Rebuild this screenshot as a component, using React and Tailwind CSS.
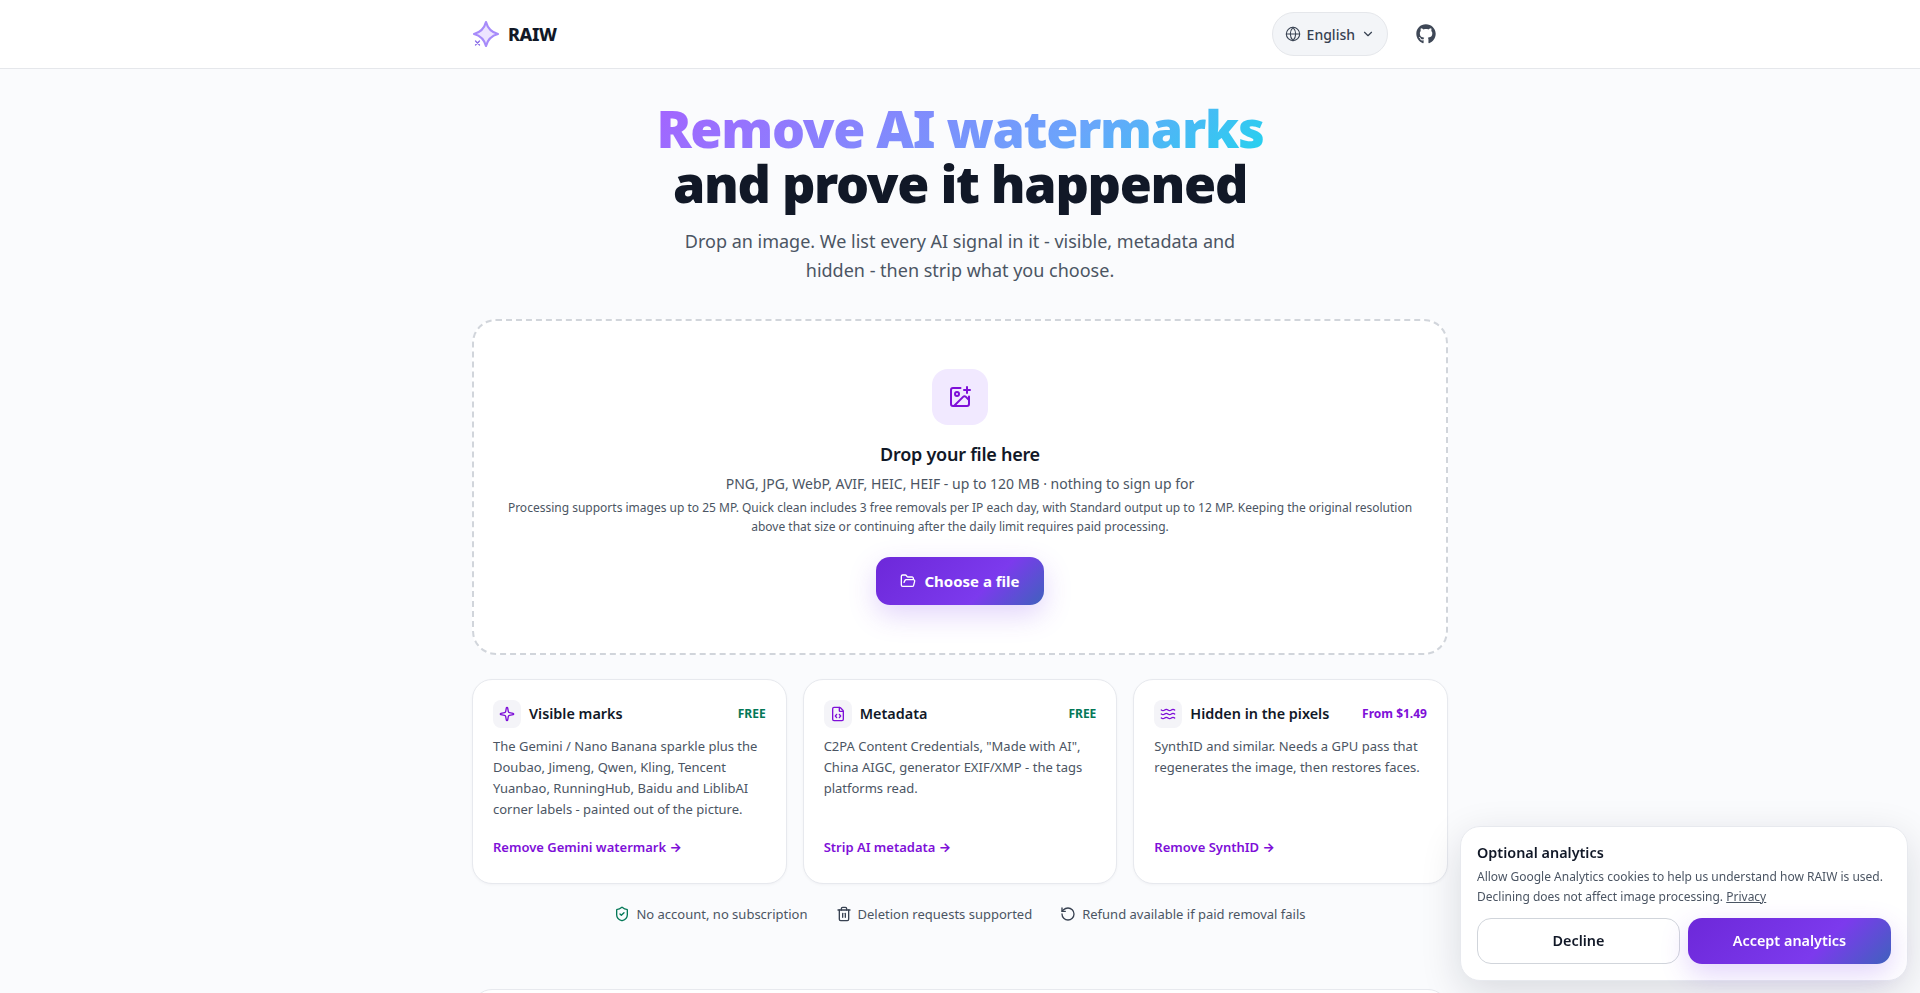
import React from 'react';
import { Globe, ChevronDown, ImagePlus, FolderOpen, Sparkle, FileCode, Waves, ShieldCheck, Trash2, RotateCcw } from 'lucide-react';
import { FaGithub } from 'react-icons/fa';

function Logo() {
  return (
    <svg width="28" height="28" viewBox="0 0 28 28" fill="none" className="shrink-0">
      <path d="M14 2Q16.500 11.500 26 14Q16.500 16.500 14 26Q11.500 16.500 2 14Q11.500 11.500 14 2Z" fill="#ede4ff" stroke="#a78bfa" strokeWidth="2.200" strokeLinejoin="round" />
      <path d="M3.500 21l4 4M7.500 21l-4 4" stroke="#8b6fe8" strokeWidth="1.300" strokeLinecap="round" />
    </svg>
  );
}

function Card({ icon, title, badge, badgeClass, text, link }) {
  return (
    <div className="flex flex-col rounded-[20px] border border-[#e7e9ee] bg-white px-5 pt-5 pb-[26px] shadow-[0_1px_3px_rgba(16,24,40,0.04)]">
      <div className="flex items-center gap-2">
        <span className="flex h-7 w-7 shrink-0 items-center justify-center rounded-lg bg-[#f4f4f8] text-[#7e0fd8]">{icon}</span>
        <span className="flex-1 text-[14.400px] leading-7 font-semibold text-[#111827]">{title}</span>
        <span className={`text-[12px] font-bold ${badgeClass}`}>{badge}</span>
      </div>
      <p className="mt-[8px] h-[84px] text-[13px] leading-[21px] text-[#4b5563]">{text}</p>
      <a className="mt-[17px] text-[13px] leading-[20px] font-semibold text-[#7e0fd8]">
        {link} <span className="font-['Inter',sans-serif] font-bold">→</span>
      </a>
    </div>
  );
}

function Trust({ icon, children }) {
  return (
    <span className="flex items-center gap-[6px]">
      {icon}
      <span>{children}</span>
    </span>
  );
}

export default function App() {
  return (
    <div className="h-[993px] overflow-hidden bg-[#fafbfd] font-['Noto_Sans',sans-serif] text-[#111827]">
      <header className="h-[69px] border-b border-[#e5e7eb] bg-white">
        <div className="mx-auto flex h-[68px] w-[976px] items-center justify-between">
          <div className="flex items-center gap-2">
            <Logo />
            <span className="text-[18px] font-extrabold tracking-[-0.4px] text-[#111827]">RAIW</span>
          </div>
          <div className="flex items-center gap-[28px]">
            <button className="flex h-[44px] items-center gap-[6px] rounded-full border border-[#e5e7eb] bg-[#f3f5f8] px-3 text-[14px] font-medium text-[#374151]">
              <Globe size={16} strokeWidth={1.6} />
              English
              <ChevronDown size={14} strokeWidth={2} />
            </button>
            <FaGithub size={20} className="mr-3 text-[#3f4857]" />
          </div>
        </div>
      </header>

      <main className="mx-auto w-[976px]">
        <section className="pt-[31px] text-center">
          <h1 className="text-[52px] leading-[55px] font-black tracking-tight">
            <span className="bg-[linear-gradient(135deg,#a562ff,#6aa5fb_68%,#22d3ee)] bg-clip-text text-transparent">Remove AI watermarks</span>
            <br />
            <span className="text-[#111827]">and prove it happened</span>
          </h1>
          <p className="mx-auto mt-[17px] w-[600px] text-[18px] leading-[29px] text-[#4b5563]">
            Drop an image. We list every AI signal in it - visible, metadata and hidden - then strip what you choose.
          </p>
        </section>

        <section className="mt-[34px] flex h-[336px] flex-col items-center rounded-[24px] border-2 border-dashed border-[#d1d5db] bg-white px-8 pt-[48px] text-center">
          <span className="flex h-14 w-14 items-center justify-center rounded-2xl bg-[#f1e9ff] text-[#7e0fd8]">
            <ImagePlus size={24} strokeWidth={2} />
          </span>
          <h2 className="mt-[15px] text-[18px] leading-[28px] font-semibold tracking-[-0.26px] text-[#111827]">Drop your file here</h2>
          <p className="mt-[6px] text-[14px] leading-[20px] text-[#4b5563]">PNG, JPG, WebP, AVIF, HEIC, HEIF - up to 120 MB · nothing to sign up for</p>
          <p className="mt-[4px] text-[12px] leading-[19px] text-[#4b5563]">
            Processing supports images up to 25 MP. Quick clean includes 3 free removals per IP each day, with Standard output up to 12 MP. Keeping the original resolution above that size or continuing after the daily limit requires paid processing.
          </p>
          <button className="mt-[21px] flex h-[48px] items-center gap-2 rounded-[14px] bg-[linear-gradient(135deg,#6d28d9,#7c3aed_65%,#3f62bd)] px-6 text-[15px] font-bold text-white shadow-[0_10px_28px_rgba(124,58,237,0.22)]">
            <FolderOpen size={16} strokeWidth={2} />
            Choose a file
          </button>
        </section>

        <section className="mt-6 grid grid-cols-3 gap-4">
          <Card icon={<Sparkle size={16} strokeWidth={2} />} title="Visible marks" badge="FREE" badgeClass="text-[#047857]" text="The Gemini / Nano Banana sparkle plus the Doubao, Jimeng, Qwen, Kling, Tencent Yuanbao, RunningHub, Baidu and LiblibAI corner labels - painted out of the picture." link="Remove Gemini watermark" />
          <Card icon={<FileCode size={16} strokeWidth={2} />} title="Metadata" badge="FREE" badgeClass="text-[#047857]" text={'C2PA Content Credentials, "Made with AI", China AIGC, generator EXIF/XMP - the tags platforms read.'} link="Strip AI metadata" />
          <Card icon={<Waves size={16} strokeWidth={2} />} title="Hidden in the pixels" badge="From $1.49" badgeClass="text-[#7e0fd8]" text="SynthID and similar. Needs a GPU pass that regenerates the image, then restores faces." link="Remove SynthID" />
        </section>

        <section className="mt-5 flex items-center justify-center gap-[28px] text-[13px] leading-[20px] text-[#4b5563]">
          <Trust icon={<ShieldCheck size={16} strokeWidth={2} className="text-[#047857]" />}>No account, no subscription</Trust>
          <Trust icon={<Trash2 size={16} strokeWidth={2} className="text-[#374151]" />}>Deletion requests supported</Trust>
          <Trust icon={<RotateCcw size={16} strokeWidth={2} className="text-[#374151]" />}>Refund available if paid removal fails</Trust>
        </section>

        <div className="mt-[65px] h-[120px] rounded-[20px] border border-[#e7e9ee] bg-white" />
      </main>

      <aside className="fixed right-3 bottom-3 w-[448px] rounded-[20px] border border-[#e7e9ee] bg-white p-4 shadow-[0_12px_40px_rgba(16,24,40,0.14)]">
        <h3 className="text-[14.400px] leading-[20px] font-semibold text-[#111827]">Optional analytics</h3>
        <p className="mt-[4px] text-[12px] leading-[20px] text-[#4b5563]">
          Allow Google Analytics cookies to help us understand how RAIW is used. Declining does not affect image processing. <a className="underline">Privacy</a>
        </p>
        <div className="mt-[11px] grid grid-cols-2 gap-2">
          <button className="h-[46px] rounded-[14px] border border-[#d1d5db] bg-white text-[14.400px] font-semibold text-[#111827]">Decline</button>
          <button className="h-[46px] rounded-[14px] bg-[linear-gradient(135deg,#6d28d9,#7c3aed_65%,#3f62bd)] text-[14.400px] font-semibold text-white shadow-[0_10px_28px_rgba(124,58,237,0.22)]">Accept analytics</button>
        </div>
      </aside>
    </div>
  );
}
